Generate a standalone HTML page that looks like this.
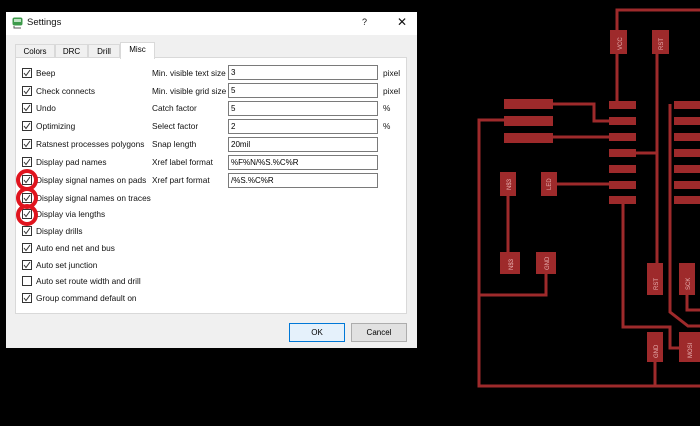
<!DOCTYPE html>
<html><head><meta charset="utf-8"><style>
*{margin:0;padding:0;box-sizing:border-box}
body{width:700px;height:426px;background:#000;position:relative;overflow:hidden;font-family:"Liberation Sans",sans-serif;font-size:8px;color:#000}
.a{position:absolute}
#dlg{left:6px;top:12px;width:411px;height:336px;background:#f0f0f0}
#title{left:0;top:0;width:411px;height:23px;background:#fff}
.cb{position:absolute;width:10px;height:10px;border:1px solid #333;background:#fff}
.cb svg{position:absolute;left:0;top:0}
.lb{position:absolute;font-size:8.3px;white-space:nowrap;color:#111}
.in{position:absolute;left:222px;width:150px;height:15px;border:1px solid #7a7a7a;background:#fff;padding-left:2px;line-height:13px;font-size:8px}
.tab{position:absolute;top:32px;height:14px;border:1px solid #d9d9d9;border-bottom:none;background:#f0f0f0;text-align:center;line-height:13px;font-size:8px}
.btn{position:absolute;top:311px;height:19px;border:1px solid #adadad;background:#e1e1e1;text-align:center;line-height:17px;font-size:8px}
.ring{position:absolute;width:22px;height:22px;border:4px solid #e0141e;border-radius:50%}
</style></head><body>
<div id="dlg" class="a">
 <div id="title" class="a">
  <svg class="a" style="left:6px;top:5px" width="11" height="12"><rect x="0.5" y="0.5" width="10" height="8" rx="2" fill="#3c9a4a"/><rect x="2" y="2" width="7" height="3" fill="#bfe3c4"/><path d="M2 9 v2 h7" stroke="#555" fill="none"/></svg>
  <div class="lb" style="left:21px;top:5px;font-size:9.5px">Settings</div>
  <div class="lb" style="left:356px;top:5px;font-size:9px">?</div>
  <div class="lb" style="left:391px;top:3px;font-size:12px">✕</div>
 </div>
 <div class="tab" style="left:9px;width:40px">Colors</div>
 <div class="tab" style="left:49px;width:33px">DRC</div>
 <div class="tab" style="left:82px;width:32px">Drill</div>
 <div class="a" style="left:9px;top:45px;width:392px;height:257px;background:#fff;border:1px solid #d9d9d9"></div>
 <div class="tab" style="left:114px;top:30px;width:35px;height:17px;background:#fff;border-color:#d9d9d9;z-index:2">Misc</div>
</div>
<div class="cb" style="left:22px;top:68px"><svg width="8" height="8"><path d="M1 4 L3 6.5 L7 1" stroke="#333" fill="none"/></svg></div><div class="lb" style="left:36px;top:68px">Beep</div>
<div class="cb" style="left:22px;top:86px"><svg width="8" height="8"><path d="M1 4 L3 6.5 L7 1" stroke="#333" fill="none"/></svg></div><div class="lb" style="left:36px;top:86px">Check connects</div>
<div class="cb" style="left:22px;top:103px"><svg width="8" height="8"><path d="M1 4 L3 6.5 L7 1" stroke="#333" fill="none"/></svg></div><div class="lb" style="left:36px;top:103px">Undo</div>
<div class="cb" style="left:22px;top:121px"><svg width="8" height="8"><path d="M1 4 L3 6.5 L7 1" stroke="#333" fill="none"/></svg></div><div class="lb" style="left:36px;top:121px">Optimizing</div>
<div class="cb" style="left:22px;top:139px"><svg width="8" height="8"><path d="M1 4 L3 6.5 L7 1" stroke="#333" fill="none"/></svg></div><div class="lb" style="left:36px;top:139px">Ratsnest processes polygons</div>
<div class="cb" style="left:22px;top:157px"><svg width="8" height="8"><path d="M1 4 L3 6.5 L7 1" stroke="#333" fill="none"/></svg></div><div class="lb" style="left:36px;top:157px">Display pad names</div>
<div class="cb" style="left:22px;top:175px"><svg width="8" height="8"><path d="M1 4 L3 6.5 L7 1" stroke="#333" fill="none"/></svg></div><div class="lb" style="left:36px;top:175px">Display signal names on pads</div>
<div class="cb" style="left:22px;top:193px"><svg width="8" height="8"><path d="M1 4 L3 6.5 L7 1" stroke="#333" fill="none"/></svg></div><div class="lb" style="left:36px;top:193px">Display signal names on traces</div>
<div class="cb" style="left:22px;top:209px"><svg width="8" height="8"><path d="M1 4 L3 6.5 L7 1" stroke="#333" fill="none"/></svg></div><div class="lb" style="left:36px;top:209px">Display via lengths</div>
<div class="cb" style="left:22px;top:226px"><svg width="8" height="8"><path d="M1 4 L3 6.5 L7 1" stroke="#333" fill="none"/></svg></div><div class="lb" style="left:36px;top:226px">Display drills</div>
<div class="cb" style="left:22px;top:243px"><svg width="8" height="8"><path d="M1 4 L3 6.5 L7 1" stroke="#333" fill="none"/></svg></div><div class="lb" style="left:36px;top:243px">Auto end net and bus</div>
<div class="cb" style="left:22px;top:260px"><svg width="8" height="8"><path d="M1 4 L3 6.5 L7 1" stroke="#333" fill="none"/></svg></div><div class="lb" style="left:36px;top:260px">Auto set junction</div>
<div class="cb" style="left:22px;top:276px"></div><div class="lb" style="left:36px;top:276px">Auto set route width and drill</div>
<div class="cb" style="left:22px;top:293px"><svg width="8" height="8"><path d="M1 4 L3 6.5 L7 1" stroke="#333" fill="none"/></svg></div><div class="lb" style="left:36px;top:293px">Group command default on</div>
<div class="ring" style="left:16px;top:169px"></div>
<div class="ring" style="left:16px;top:187px"></div>
<div class="ring" style="left:16px;top:204px"></div>
<div class="lb" style="left:152px;top:68px">Min. visible text size</div><div class="in" style="left:228px;top:65px">3</div><div class="lb" style="left:383px;top:68px">pixel</div>
<div class="lb" style="left:152px;top:86px">Min. visible grid size</div><div class="in" style="left:228px;top:83px">5</div><div class="lb" style="left:383px;top:86px">pixel</div>
<div class="lb" style="left:152px;top:103px">Catch factor</div><div class="in" style="left:228px;top:101px">5</div><div class="lb" style="left:383px;top:103px">%</div>
<div class="lb" style="left:152px;top:121px">Select factor</div><div class="in" style="left:228px;top:119px">2</div><div class="lb" style="left:383px;top:121px">%</div>
<div class="lb" style="left:152px;top:139px">Snap length</div><div class="in" style="left:228px;top:137px">20mil</div>
<div class="lb" style="left:152px;top:157px">Xref label format</div><div class="in" style="left:228px;top:155px">%F%N/%S.%C%R</div>
<div class="lb" style="left:152px;top:175px">Xref part format</div><div class="in" style="left:228px;top:173px">/%S.%C%R</div>
<div class="btn" style="left:289px;top:323px;width:56px;border:1px solid #0078d7;background:#e5f1fb">OK</div>
<div class="btn" style="left:351px;top:323px;width:56px">Cancel</div>
<svg class="a" style="left:0;top:0" width="700" height="426">
<g stroke="#9e2a2b" stroke-width="3" fill="none">
<path d="M617 104 V10 H700"/>
<path d="M657 54 V265"/>
<path d="M553 104 H594 V121 H609"/>
<path d="M553 137 H609"/>
<path d="M504 120 H479 V386 H700"/>
<path d="M508 195 V252"/>
<path d="M557 184 H609"/>
<path d="M546 274 V295 H479"/>
<path d="M623 204 V327 H670 V348 H680"/>
<path d="M636 153 H657"/>
<path d="M655 362 V386"/>
<path d="M687 295 V310 H700"/>
<path d="M670 104 V312 L688 326 H700"/>
</g>
<g fill="#9e2a2b">
<rect x="610" y="30" width="17" height="24"/>
<rect x="652" y="30" width="17" height="24"/>
<rect x="609" y="101" width="27" height="8"/><rect x="609" y="117" width="27" height="8"/><rect x="609" y="133" width="27" height="8"/><rect x="609" y="149" width="27" height="8"/><rect x="609" y="165" width="27" height="8"/><rect x="609" y="181" width="27" height="8"/><rect x="609" y="196" width="27" height="8"/>
<rect x="674" y="101" width="26" height="8"/><rect x="674" y="117" width="26" height="8"/><rect x="674" y="133" width="26" height="8"/><rect x="674" y="149" width="26" height="8"/><rect x="674" y="165" width="26" height="8"/><rect x="674" y="181" width="26" height="8"/><rect x="674" y="196" width="26" height="8"/>
<rect x="504" y="99" width="49" height="10"/><rect x="504" y="116" width="49" height="10"/><rect x="504" y="133" width="49" height="10"/>
<rect x="500" y="172" width="16" height="24"/><rect x="541" y="172" width="16" height="24"/>
<rect x="500" y="252" width="20" height="22"/><rect x="536" y="252" width="20" height="22"/>
<rect x="647" y="263" width="16" height="32"/><rect x="679" y="263" width="16" height="32"/>
<rect x="647" y="332" width="16" height="30"/><rect x="679" y="332" width="21" height="30"/>
</g>
<g fill="#e8b0b0" font-size="6" font-family="Liberation Sans">
<text transform="translate(622,50) rotate(-90)">VCC</text>
<text transform="translate(663,50) rotate(-90)">RST</text>
<text transform="translate(511,190) rotate(-90)">N$3</text>
<text transform="translate(551,190) rotate(-90)">LED</text>
<text transform="translate(513,270) rotate(-90)">N$3</text>
<text transform="translate(549,270) rotate(-90)">GND</text>
<text transform="translate(658,290) rotate(-90)">RST</text>
<text transform="translate(690,290) rotate(-90)">SCK</text>
<text transform="translate(658,358) rotate(-90)">GND</text>
<text transform="translate(692,358) rotate(-90)">MOSI</text>
</g>
</svg>
</body></html>
